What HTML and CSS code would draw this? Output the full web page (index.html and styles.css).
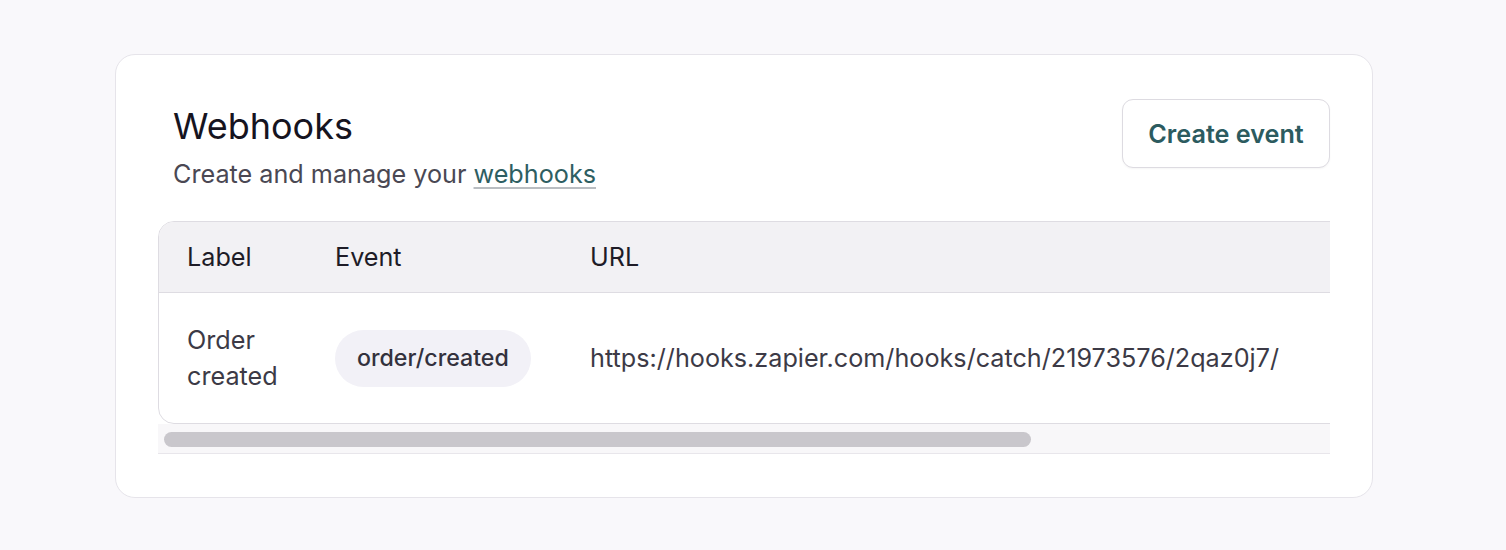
FILE: index.html
```html
<!DOCTYPE html>
<html lang="en">
<head>
<meta charset="utf-8">
<title>Webhooks</title>
<link rel="stylesheet" href="styles.css">
</head>
<body>
<section class="card">
  <header class="card-header">
    <div class="heading">
      <h1 class="title">Webhooks</h1>
      <p class="subtitle">Create and manage your <a class="link" href="#">webhooks</a></p>
    </div>
    <button class="btn" type="button">Create event</button>
  </header>
  <div class="table-scroll">
    <div class="table-viewport">
      <table class="table">
        <thead>
          <tr>
            <th class="col-label">Label</th>
            <th class="col-event">Event</th>
            <th class="col-url">URL</th>
            <th class="col-extra"></th>
          </tr>
        </thead>
        <tbody>
          <tr>
            <td class="col-label">Order created</td>
            <td class="col-event"><span class="badge">order/created</span></td>
            <td class="col-url">https://hooks.zapier.com/hooks/catch/21973576/2qaz0j7/</td>
            <td class="col-extra"></td>
          </tr>
        </tbody>
      </table>
    </div>
    <div class="scrollbar" aria-hidden="true">
      <div class="scrollbar-thumb" style="width: 867px;"></div>
    </div>
  </div>
</section>
</body>
</html>
```
FILE: styles.css
```css
* { box-sizing: border-box; }

html, body {
  margin: 0;
  padding: 0;
}

body {
  background: #f9f8fb;
  font-family: "Inter", "Noto Sans", sans-serif;
  color: #1c1b24;
  padding: 54px 0 0 115px;
}

.card {
  width: 1258px;
  background: #ffffff;
  border: 1px solid #e6e4ea;
  border-radius: 20px;
  padding: 44px 42px 43px 42px;
}

.card-header {
  display: flex;
  justify-content: space-between;
  align-items: flex-start;
  padding-left: 15px;
}

.heading {
  padding-top: 3px;
}

.title {
  margin: 0;
  font-size: 36px;
  line-height: 48px;
  font-weight: 400;
  color: #16141f;
}

.subtitle {
  margin: 6px 0 0 0;
  font-size: 25.2px;
  line-height: 36px;
  color: #4a4853;
}

.link {
  color: #2e5e62;
  text-decoration: underline;
  text-decoration-color: #b9bdc1;
  text-decoration-thickness: 2px;
  text-underline-offset: 4px;
}

.btn {
  width: 208px;
  height: 69px;
  background: #ffffff;
  border: 1px solid #dddbe1;
  border-radius: 11px;
  font-family: inherit;
  font-size: 25.2px;
  font-weight: 600;
  color: #2c5b5f;
  box-shadow: 0 1px 2px rgba(20, 18, 30, 0.04);
  cursor: pointer;
  padding: 0;
}

.table-scroll {
  margin-top: 29px;
}

.table-viewport {
  overflow: hidden;
}

.table {
  width: 1563px;
  border-collapse: separate;
  border-spacing: 0;
  border: 1px solid #dedce2;
  border-radius: 16px;
  font-size: 25.2px;
  table-layout: fixed;
}

.table th {
  height: 71px;
  background: #f2f1f4;
  text-align: left;
  font-weight: 400;
  color: #1e1c27;
  border-bottom: 1px solid #dedce2;
  padding: 0;
}

.table th:first-child { border-top-left-radius: 15px; }
.table th:last-child { border-top-right-radius: 15px; }

.table td {
  height: 130px;
  padding: 0;
  color: #3c3a46;
  line-height: 36px;
  vertical-align: middle;
}

.col-label { width: 176px; padding-left: 28px !important; padding-right: 28px !important; }
.col-event { width: 255px; }
.col-url { width: 760px; }
.col-extra { width: auto; }

.badge {
  display: inline-block;
  background: #f2f1f7;
  color: #33313d;
  font-weight: 500;
  font-size: 23.2px;
  line-height: 57px;
  padding: 0 22px;
  border-radius: 999px;
}

.scrollbar {
  height: 30px;
  background: #f8f7f9;
  border-bottom: 1px solid #e8e6eb;
  padding: 8px 0 0 6px;
}

.scrollbar-thumb {
  height: 15px;
  background: #c9c7cc;
  border-radius: 999px;
}
```
